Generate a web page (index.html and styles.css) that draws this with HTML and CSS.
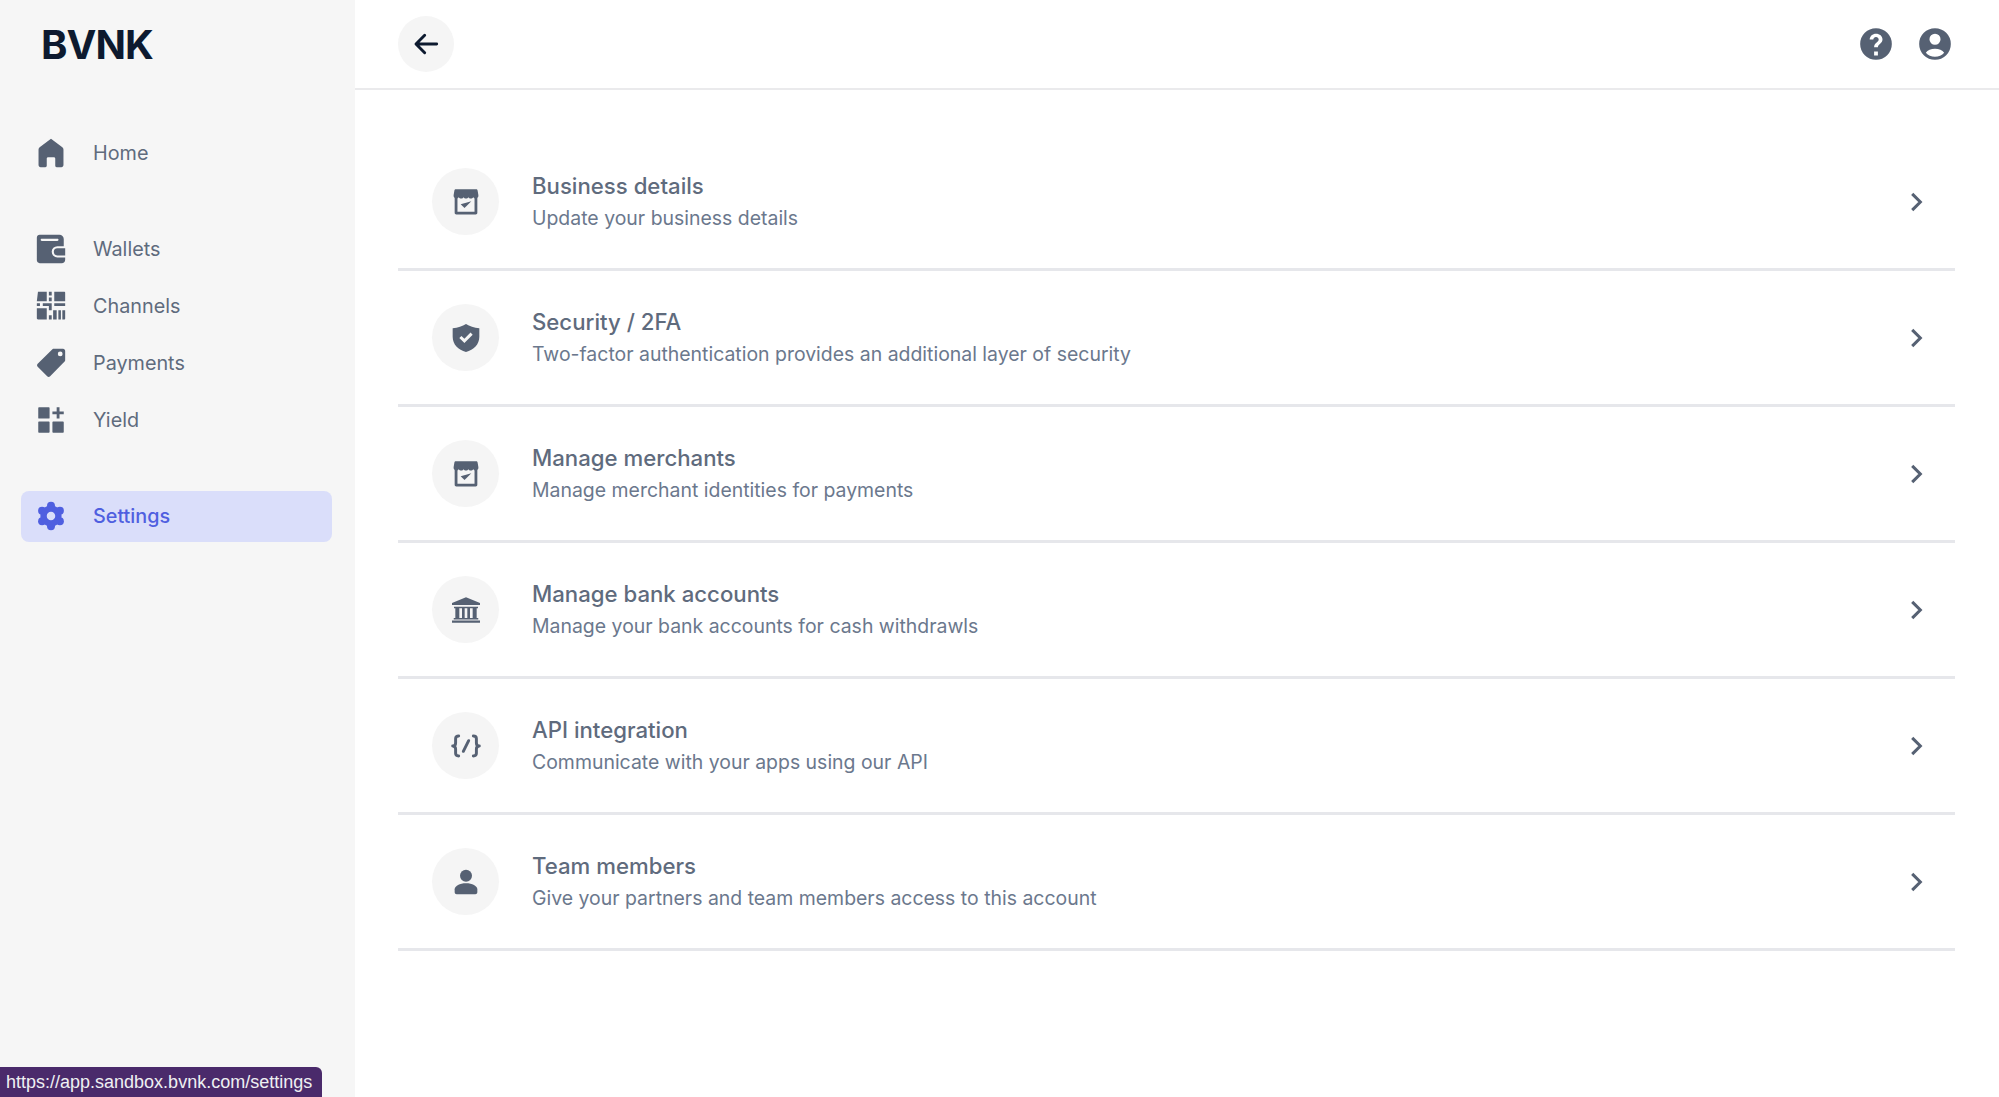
FILE: index.html
```html
<!DOCTYPE html>
<html lang="en">
<head>
    <meta charset="UTF-8">
    <title>Settings</title>
    <link rel="stylesheet" href="styles.css">
</head>
<body>
    <svg class="icon-defs" width="0" height="0">
        <symbol id="i-store" viewBox="0 0 24 24">
            <path d="M4.400 2.500h15.200c.6 0 1 .3 1.100.9l.6 3.600c.2 1.300-.8 2.400-1.900 2.400-.9 0-1.500-.4-1.900-1-.4.600-1.100 1-1.900 1s-1.500-.4-1.800-1c-.3.600-1 1-1.800 1s-1.500-.4-1.800-1c-.3.600-1 1-1.800 1s-1.500-.4-1.900-1c-.4.600-1 1-1.900 1-1.100 0-2.100-1.100-1.900-2.400l.6-3.600c.1-.6.500-.9 1.100-.9z"/>
            <path d="M3.500 9h2.100v10.300h12.800V9h2.100v11c0 .8-.5 1.300-1.200 1.300H4.700c-.7 0-1.200-.5-1.200-1.300z"/>
            <path class="thin" d="M8 13.700l2.900 2.800 5.100-5"/>
        </symbol>
    </svg>

    <div class="app">
        <aside class="sidebar">
            <div class="logo">BVNK</div>
            <nav class="nav">
                <div class="nav-group">
                    <a class="nav-item">
                        <svg class="nav-icon" viewBox="0 0 24 24"><path d="M12 2l8 6c.5.4.8 1 .8 1.600v10.900c0 .9-.6 1.500-1.500 1.500H16c-.6 0-1-.4-1-1v-5c0-.6-.4-1-1-1h-4c-.6 0-1 .4-1 1v5c0 .6-.4 1-1 1H4.700c-.9 0-1.500-.6-1.500-1.500V9.600c0-.6.3-1.200.8-1.600z"/></svg>
                        Home
                    </a>
                </div>
                <div class="nav-group">
                    <a class="nav-item">
                        <svg class="nav-icon" viewBox="0 0 24 24"><path fill-rule="evenodd" d="M4 2h14c1.500 0 3 1.300 3 3v5h-4.500a4 4 0 0 0 0 8H22v1.500c0 1.400-1 2.500-2.500 2.500H4c-1.100 0-2-.9-2-2V4c0-1.100.9-2 2-2zm1.500 2.700c-.5 0-.8.300-.8.800s.3.800.8.800h11c.5 0 .8-.3.8-.8s-.3-.8-.8-.8z"/><path d="M16.500 11.500H22v5h-5.500a2.500 2.500 0 0 1 0-5z"/><circle class="hole" cx="17" cy="14" r="1.300"/></svg>
                        Wallets
                    </a>
                    <a class="nav-item">
                        <svg class="nav-icon" viewBox="0 0 24 24"><path d="M2.800 2H9v6.600H2zM10.500 2h2v2.500h-2zM10.500 6h2v2.600h-2zM14.300 2h7c.4 0 .7.300.7.700v5.900h-7.700zM2 10h2.200v2H2zM6.200 10h6.300v5h-2v-3H6.200zM14.300 10H22v2h-7.700zM2 13.600h7v7.900H2.800c-.4 0-.8-.4-.8-.8zM10.500 18.500h2v3h-2zM13.500 15H16v6.500h-2.500zM17.200 15H19v6.500h-1.800zM20 15h2v5.800c0 .4-.3.700-.7.700H20z"/></svg>
                        Channels
                    </a>
                    <a class="nav-item">
                        <svg class="nav-icon" viewBox="0 0 24 24"><path fill-rule="evenodd" d="M13 2.300c.3-.2.600-.3 1-.3h6.500c.8 0 1.500.7 1.500 1.500V10c0 .4-.1.700-.4 1L11.400 21.400c-.6.600-1.500.6-2.100 0l-6.700-6.700c-.6-.6-.6-1.500 0-2.100zM18.500 7.300a1.700 1.700 0 1 0 0-3.400 1.700 1.700 0 0 0 0 3.400z"/></svg>
                        Payments
                    </a>
                    <a class="nav-item">
                        <svg class="nav-icon" viewBox="0 0 24 24"><path d="M3 3.500c0-.3.200-.5.500-.5h7c.3 0 .5.200.5.500v7c0 .3-.2.500-.5.500h-7c-.3 0-.5-.2-.5-.5zM3 13.500c0-.3.200-.5.500-.5h7c.3 0 .5.200.5.500v7c0 .3-.2.500-.5.500h-7c-.3 0-.5-.2-.5-.5zM13 13.500c0-.3.200-.5.500-.5h7c.3 0 .5.200.5.500v7c0 .3-.2.500-.5.500h-7c-.3 0-.5-.2-.5-.5zM16 3h2v3h3v2h-3v3h-2V8h-3V6h3z"/></svg>
                        Yield
                    </a>
                </div>
                <div class="nav-group">
                    <a class="nav-item active">
                        <svg class="nav-icon" viewBox="0 0 24 24"><g><circle cx="12" cy="4.700" r="2.800"/><circle cx="18.300" cy="8.350" r="2.800"/><circle cx="18.300" cy="15.650" r="2.800"/><circle cx="12" cy="19.300" r="2.800"/><circle cx="5.700" cy="15.650" r="2.800"/><circle cx="5.700" cy="8.350" r="2.800"/><path fill-rule="evenodd" d="M12 4.500a7.500 7.500 0 1 1 0 15 7.500 7.500 0 0 1 0-15zm0 4.500a3 3 0 1 0 0 6 3 3 0 0 0 0-6z"/></g></svg>
                        Settings
                    </a>
                </div>
            </nav>
        </aside>

        <div class="main">
            <header class="topbar">
                <button class="back-btn">
                    <svg viewBox="0 0 24 24" width="32" height="32"><path d="M20 12H5M11 5.500L4.500 12l6.500 6.500"/></svg>
                </button>
                <div class="top-actions">
                    <svg viewBox="0 0 24 24" width="38" height="38"><path fill-rule="evenodd" d="M12 2a10 10 0 1 1 0 20 10 10 0 0 1 0-20zm-1.200 14.800v2.400h2.400v-2.400zM12 5.500c-2.200 0-3.900 1.500-4 3.600h2.300c.1-.9.800-1.500 1.700-1.500s1.700.6 1.700 1.500c0 1.900-2.900 1.800-2.900 5h2.400c0-2.200 2.900-2.500 2.900-5C16.100 7 14.300 5.500 12 5.500z"/></svg>
                    <svg viewBox="0 0 24 24" width="38" height="38"><path fill-rule="evenodd" d="M12 2a10 10 0 1 1 0 20 10 10 0 0 1 0-20zm0 3.500a3.500 3.500 0 1 0 0 7 3.500 3.500 0 0 0 0-7zm0 9.500c-2.500 0-4.700 1-5.800 2.500 1.400 1.600 3.500 2.500 5.800 2.500s4.400-.9 5.800-2.500C16.700 16 14.500 15 12 15z"/></svg>
                </div>
            </header>

            <ul class="settings-list">
                <li class="settings-row">
                    <span class="row-icon"><svg viewBox="0 0 24 24"><use href="#i-store"/></svg></span>
                    <div class="row-text">
                        <div class="row-title">Business details</div>
                        <div class="row-sub">Update your business details</div>
                    </div>
                    <svg class="chevron" viewBox="0 0 24 24"><path d="M8.500 4.500L16 12l-7.500 7.500"/></svg>
                </li>
                <li class="settings-row">
                    <span class="row-icon"><svg viewBox="0 0 24 24"><path fill-rule="evenodd" d="M12 1.500c2.700 1.700 6 2.900 10 3.200v6.300c0 5.800-4.200 9.800-10 11.500C6.200 20.800 2 16.800 2 11V4.700c4-.3 7.300-1.500 10-3.200zm5 8l-1.600-1.600-4.600 4.700-2.200-2.100L7 12l3.800 3.800z"/></svg></span>
                    <div class="row-text">
                        <div class="row-title">Security / 2FA</div>
                        <div class="row-sub">Two-factor authentication provides an additional layer of security</div>
                    </div>
                    <svg class="chevron" viewBox="0 0 24 24"><path d="M8.500 4.500L16 12l-7.500 7.500"/></svg>
                </li>
                <li class="settings-row">
                    <span class="row-icon"><svg viewBox="0 0 24 24"><use href="#i-store"/></svg></span>
                    <div class="row-text">
                        <div class="row-title">Manage merchants</div>
                        <div class="row-sub">Manage merchant identities for payments</div>
                    </div>
                    <svg class="chevron" viewBox="0 0 24 24"><path d="M8.500 4.500L16 12l-7.500 7.500"/></svg>
                </li>
                <li class="settings-row">
                    <span class="row-icon"><svg viewBox="0 0 24 24"><path fill-rule="evenodd" d="M12 2.500l10.500 4.300v1.400h-21V6.800zM3 9.500h18v1.200h-1V18h1.200v1.200H2.800V18H4v-7.300H3zM7 10.700V18h2v-7.300zM11 10.700V18h2v-7.300zM15 10.700V18h2v-7.300zM1.500 19.800h21v1.700h-21z"/></svg></span>
                    <div class="row-text">
                        <div class="row-title">Manage bank accounts</div>
                        <div class="row-sub">Manage your bank accounts for cash withdrawls</div>
                    </div>
                    <svg class="chevron" viewBox="0 0 24 24"><path d="M8.500 4.500L16 12l-7.500 7.500"/></svg>
                </li>
                <li class="settings-row">
                    <span class="row-icon"><svg class="line" viewBox="0 0 24 24"><path d="M6.500 4.500c-1.500 0-2.300.7-2.300 2v3.200c0 1.400-.7 2.300-2.200 2.300 1.500 0 2.200.9 2.200 2.300v3.200c0 1.300.8 2 2.300 2M17.500 4.500c1.500 0 2.300.7 2.300 2v3.200c0 1.400.7 2.300 2.200 2.300-1.500 0-2.200.9-2.200 2.300v3.200c0 1.300-.8 2-2.300 2M14 8l-4 8"/></svg></span>
                    <div class="row-text">
                        <div class="row-title">API integration</div>
                        <div class="row-sub">Communicate with your apps using our API</div>
                    </div>
                    <svg class="chevron" viewBox="0 0 24 24"><path d="M8.500 4.500L16 12l-7.500 7.500"/></svg>
                </li>
                <li class="settings-row">
                    <span class="row-icon"><svg viewBox="0 0 24 24"><circle cx="12" cy="7.250" r="4.500"/><path d="M12 13c-4.700 0-8.500 2-8.500 4.500v2.200c0 .8.700 1.500 1.500 1.500h14c.8 0 1.500-.7 1.500-1.500v-2.200c0-2.500-3.800-4.500-8.500-4.500z"/></svg></span>
                    <div class="row-text">
                        <div class="row-title">Team members</div>
                        <div class="row-sub">Give your partners and team members access to this account</div>
                    </div>
                    <svg class="chevron" viewBox="0 0 24 24"><path d="M8.500 4.500L16 12l-7.500 7.500"/></svg>
                </li>
            </ul>
        </div>
    </div>

    <div class="status-link">https://app.sandbox.bvnk.com/settings</div>
</body>
</html>
```

FILE: styles.css
```css
* {
    margin: 0;
    padding: 0;
    box-sizing: border-box;
}
body {
    font-family: 'Inter', sans-serif;
    background: white;
    color: #5f6b7d;
    height: 100vh;
    overflow: hidden;
}
.icon-defs {
    position: absolute;
}
.app {
    display: flex;
    height: 100vh;
}

/* sidebar */
.sidebar {
    width: 355px;
    flex-shrink: 0;
    background: #f6f6f6;
}
.logo {
    padding: 21px 0 0 41px;
    height: 107px;
    font-size: 40px;
    line-height: 48px;
    font-weight: 700;
    letter-spacing: -0.9px;
    color: #0d1a2f;
}
.nav {
    display: flex;
    flex-direction: column;
    gap: 45px;
    padding: 20.5px 23px 0 21px;
}
.nav-group {
    display: flex;
    flex-direction: column;
    gap: 6px;
}
.nav-item {
    display: flex;
    align-items: center;
    gap: 25px;
    height: 51px;
    padding-left: 13px;
    border-radius: 8px;
    font-size: 19.8px;
    color: #5f6b7d;
}
.nav-icon {
    width: 34px;
    height: 34px;
    fill: #566173;
}
.nav-icon .hole {
    fill: #566173;
}
.nav-item.active {
    background: #dadefa;
    color: #4f5fe0;
    font-weight: 500;
}
.nav-item.active .nav-icon {
    fill: #4f5fe0;
}

/* top bar */
.main {
    flex: 1;
    min-width: 0;
}
.topbar {
    display: flex;
    align-items: center;
    justify-content: space-between;
    height: 90px;
    padding: 0 45px 0 43px;
    border-bottom: 2px solid #eaeaec;
}
.back-btn {
    display: flex;
    align-items: center;
    justify-content: center;
    width: 56px;
    height: 56px;
    border: none;
    border-radius: 50%;
    background: #f5f5f5;
}
.back-btn path {
    fill: none;
    stroke: #0d1a2f;
    stroke-width: 2.2;
    stroke-linecap: round;
    stroke-linejoin: round;
}
.top-actions {
    display: flex;
    gap: 21px;
}
.top-actions svg {
    fill: #566173;
}

/* settings rows */
.settings-list {
    list-style: none;
    margin: 45px 44px 0 43px;
}
.settings-row {
    display: flex;
    align-items: center;
    height: 136px;
    padding: 0 26px 0 34px;
    border-bottom: 3px solid #e6e7eb;
}
.row-icon {
    display: flex;
    align-items: center;
    justify-content: center;
    width: 67px;
    height: 67px;
    border-radius: 50%;
    background: #f5f5f5;
    flex-shrink: 0;
}
.row-icon svg {
    width: 32px;
    height: 32px;
    fill: #566173;
}
.row-icon svg .thin {
    fill: none;
    stroke: #566173;
    stroke-width: 2.2;
}
.row-icon svg.line {
    fill: none;
    stroke: #566173;
    stroke-width: 2.2;
    stroke-linecap: round;
    stroke-linejoin: round;
}
.row-text {
    flex: 1;
    margin-left: 33px;
}
.row-title {
    font-size: 22.2px;
    line-height: 33px;
    font-weight: 500;
    color: #5f6b7d;
}
.row-sub {
    font-size: 19.45px;
    line-height: 32px;
    color: #6b788d;
}
.chevron {
    width: 26px;
    height: 26px;
    fill: none;
    stroke: #566173;
    stroke-width: 2.8;
}

/* link preview in the corner */
.status-link {
    position: fixed;
    left: 0;
    bottom: 0;
    width: 322px;
    height: 30px;
    padding-left: 6px;
    background: #4a2a6b;
    border-top-right-radius: 6px;
    color: #eef0f2;
    font-family: 'Liberation Sans', sans-serif;
    font-size: 18px;
    line-height: 31px;
    white-space: nowrap;
}
```
